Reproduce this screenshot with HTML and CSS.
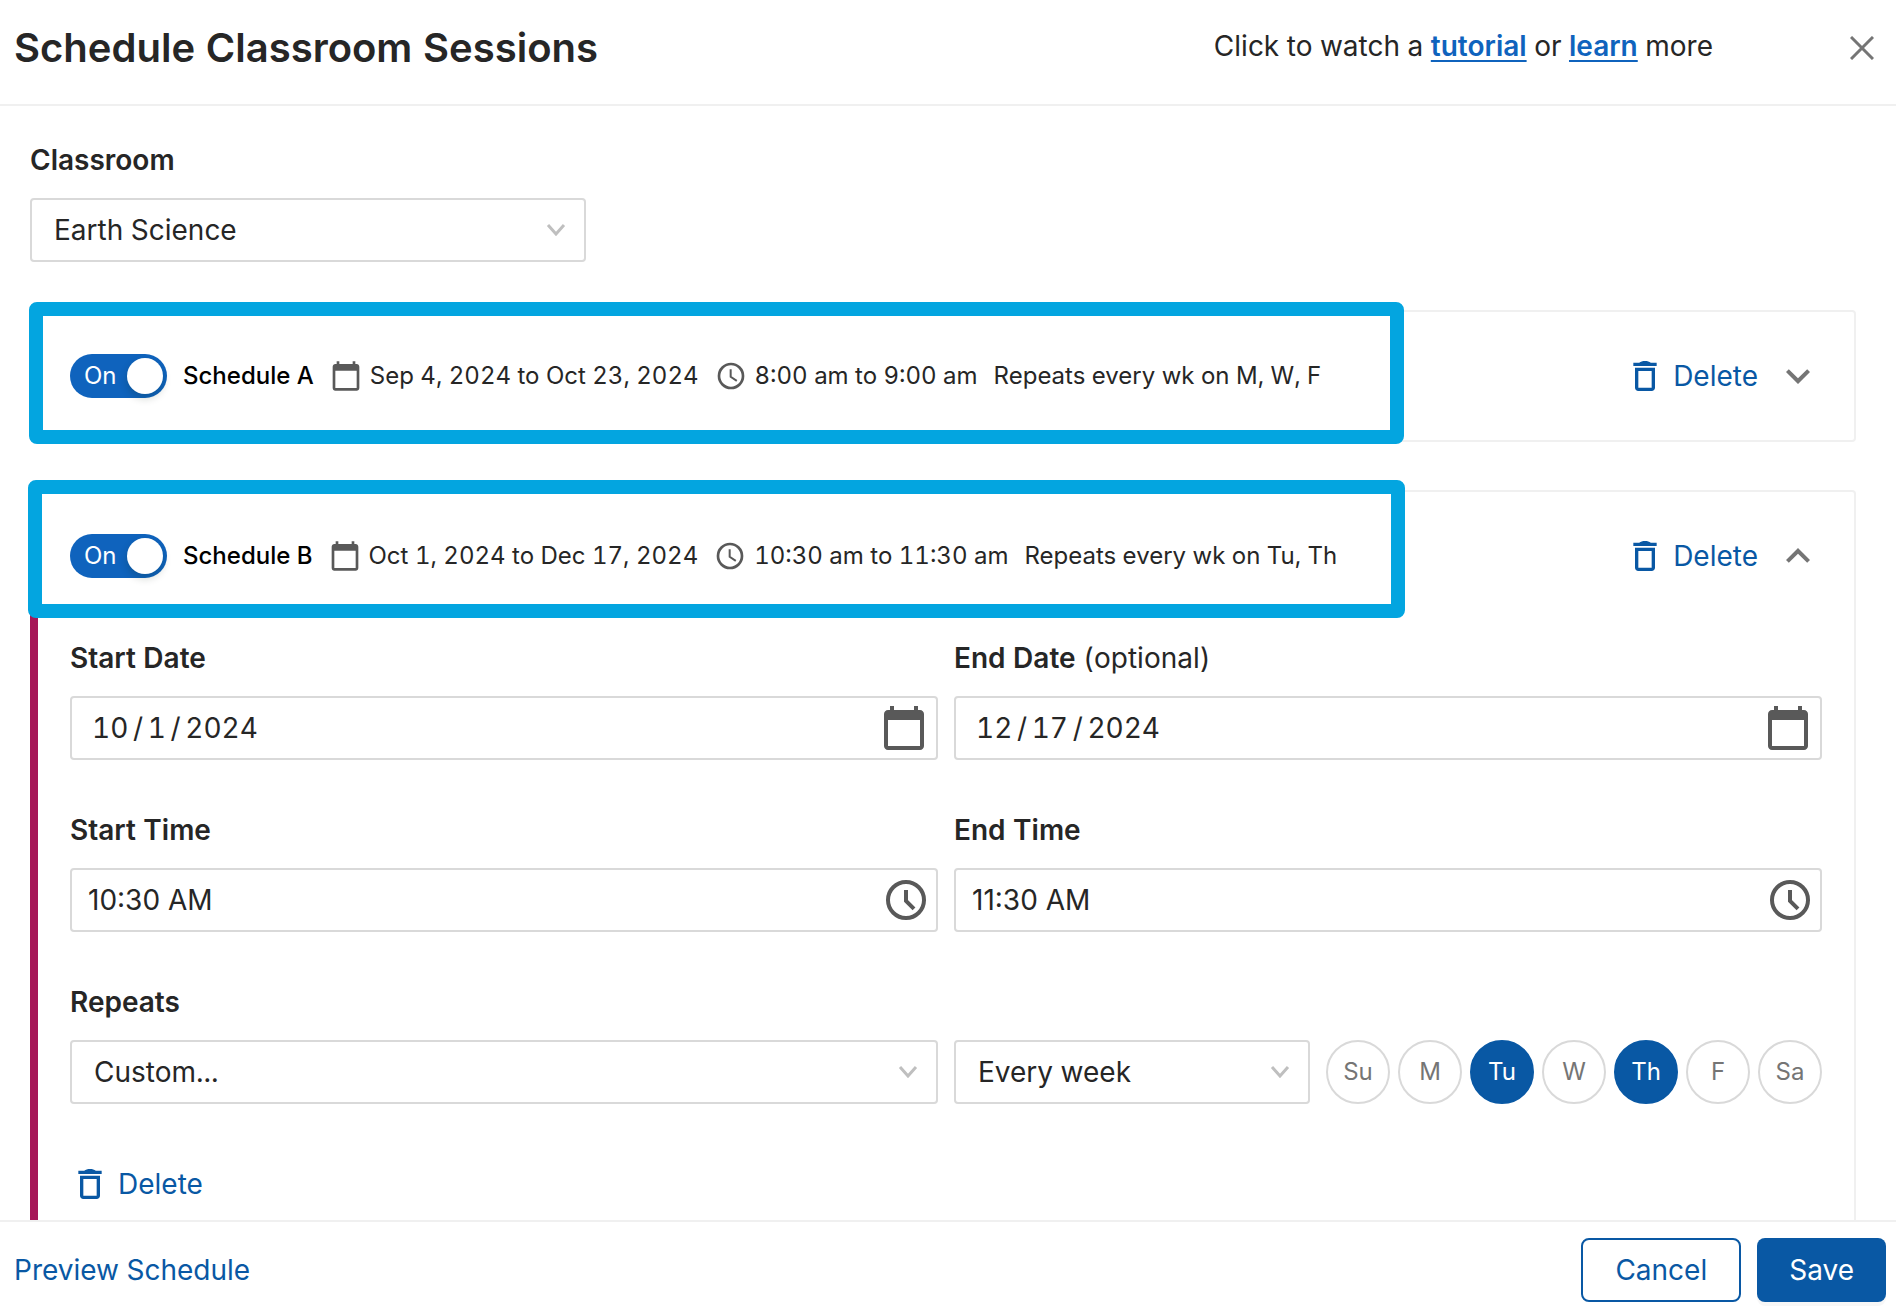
FILE: index.html
```html
<!DOCTYPE html>
<html lang="en">
<head>
<meta charset="utf-8">
<meta name="viewport" content="width=device-width, initial-scale=1">
<title>Schedule Classroom Sessions</title>
<link rel="stylesheet" href="styles.css">
</head>
<body>
<svg class="sprite" aria-hidden="true">
  <symbol id="i-calendar" viewBox="0 0 24 24"><path fill="currentColor" d="M20 3h-1V1h-2v2H7V1H5v2H4c-1.1 0-2 .9-2 2v16c0 1.1.9 2 2 2h16c1.1 0 2-.9 2-2V5c0-1.1-.9-2-2-2zm0 18H4V8h16v13z"/></symbol>
  <symbol id="i-clock" viewBox="0 0 24 24"><path fill="none" stroke="currentColor" stroke-width="2" d="M12 3a9 9 0 1 0 0 18a9 9 0 1 0 0-18z"/><path fill="none" stroke="currentColor" stroke-width="2" d="M12 7v5.4l4 4"/></symbol>
  <symbol id="i-clock-small" viewBox="0 0 24 24"><path fill="none" stroke="currentColor" stroke-width="2" d="M12 3a9 9 0 1 0 0 18a9 9 0 1 0 0-18z"/><path fill="none" stroke="currentColor" stroke-width="1.5" d="M11.75 7v5.6l4.6 3"/></symbol>
  <symbol id="i-trash" viewBox="0 0 24 24"><path fill="currentColor" d="M6 19c0 1.1.9 2 2 2h8c1.1 0 2-.9 2-2V7H6v12zM8 9h8v10H8V9zm7.5-5c-1-.7-2-1-3.500-1s-2.500.3-3.500 1H5v2h14V4z"/></symbol>
  <symbol id="i-expand" viewBox="0 0 24 24"><path fill="currentColor" d="M16.59 8.59L12 13.17 7.41 8.59 6 10l6 6 6-6z"/></symbol>
  <symbol id="i-collapse" viewBox="0 0 24 24"><path fill="currentColor" d="M12 8l-6 6 1.41 1.41L12 10.83l4.59 4.58L18 14z"/></symbol>
  <symbol id="i-caret" viewBox="0 0 20 12"><path fill="none" stroke="currentColor" stroke-width="3" d="M2 1l8 9l8-9"/></symbol>
  <symbol id="i-close" viewBox="0 0 24 24"><path fill="none" stroke="currentColor" stroke-width="3" d="M1 1l22 22M23 1L1 23"/></symbol>
</svg>

<div class="dialog" role="dialog" aria-labelledby="dialog-title">
  <header class="dialog-header">
    <h1 id="dialog-title">Schedule Classroom Sessions</h1>
    <p class="help">Click to watch a <a href="#tutorial">tutorial</a> or <a href="#learn">learn</a> more</p>
    <button class="close" type="button" aria-label="Close"><svg><use href="#i-close"/></svg></button>
  </header>

  <main class="dialog-body">
    <div class="field classroom">
      <label for="classroom">Classroom</label>
      <div class="select">
        <select id="classroom"><option>Earth Science</option></select>
        <svg><use href="#i-caret"/></svg>
      </div>
    </div>

    <section class="card">
      <div class="card-header">
        <label class="switch"><input type="checkbox" role="switch" checked>On</label>
        <h2>Schedule A</h2>
        <span class="fact"><svg><use href="#i-calendar"/></svg>Sep 4, 2024 to Oct 23, 2024</span>
        <span class="fact"><svg><use href="#i-clock-small"/></svg>8:00 am to 9:00 am</span>
        <span class="repeat">Repeats every wk on M, W, F</span>
        <button class="delete" type="button"><svg><use href="#i-trash"/></svg>Delete</button>
        <button class="toggle" type="button" aria-label="Expand Schedule A"><svg><use href="#i-expand"/></svg></button>
      </div>
      <div class="highlight highlight-a"></div>
    </section>

    <section class="card open">
      <div class="card-header">
        <label class="switch"><input type="checkbox" role="switch" checked>On</label>
        <h2>Schedule B</h2>
        <span class="fact"><svg><use href="#i-calendar"/></svg>Oct 1, 2024 to Dec 17, 2024</span>
        <span class="fact"><svg><use href="#i-clock-small"/></svg>10:30 am to 11:30 am</span>
        <span class="repeat">Repeats every wk on Tu, Th</span>
        <button class="delete" type="button"><svg><use href="#i-trash"/></svg>Delete</button>
        <button class="toggle" type="button" aria-label="Collapse Schedule B"><svg><use href="#i-collapse"/></svg></button>
      </div>
      <form class="card-form">
        <div class="field">
          <label for="start-date">Start Date</label>
          <div class="box date">
            <input id="start-date" type="text" value="10&#8198;/&#8198;1&#8198;/&#8198;2024">
            <button type="button" aria-label="Choose start date"><svg><use href="#i-calendar"/></svg></button>
          </div>
        </div>
        <div class="field">
          <label for="end-date">End Date <span class="optional">(optional)</span></label>
          <div class="box date">
            <input id="end-date" type="text" value="12&#8198;/&#8198;17&#8198;/&#8198;2024">
            <button type="button" aria-label="Choose end date"><svg><use href="#i-calendar"/></svg></button>
          </div>
        </div>
        <div class="field">
          <label for="start-time">Start Time</label>
          <div class="box time">
            <input id="start-time" type="text" value="10:30 AM">
            <button type="button" aria-label="Choose start time"><svg><use href="#i-clock"/></svg></button>
          </div>
        </div>
        <div class="field">
          <label for="end-time">End Time</label>
          <div class="box time">
            <input id="end-time" type="text" value="11:30 AM">
            <button type="button" aria-label="Choose end time"><svg><use href="#i-clock"/></svg></button>
          </div>
        </div>
        <div class="field">
          <label for="repeats">Repeats</label>
          <div class="select">
            <select id="repeats"><option>Custom...</option></select>
            <svg><use href="#i-caret"/></svg>
          </div>
        </div>
        <div class="frequency">
          <div class="select">
            <select aria-label="Frequency"><option>Every week</option></select>
            <svg><use href="#i-caret"/></svg>
          </div>
          <div class="days" role="group" aria-label="Days of the week">
            <label class="day"><input type="checkbox">Su</label>
            <label class="day"><input type="checkbox">M</label>
            <label class="day"><input type="checkbox" checked>Tu</label>
            <label class="day"><input type="checkbox">W</label>
            <label class="day"><input type="checkbox" checked>Th</label>
            <label class="day"><input type="checkbox">F</label>
            <label class="day"><input type="checkbox">Sa</label>
          </div>
        </div>
        <button class="delete" type="button"><svg><use href="#i-trash"/></svg>Delete</button>
      </form>
      <div class="highlight highlight-b"></div>
    </section>
  </main>

  <footer class="dialog-footer">
    <a class="preview" href="#preview">Preview Schedule</a>
    <button class="btn" type="button">Cancel</button>
    <button class="btn primary" type="button">Save</button>
  </footer>
</div>
</body>
</html>
```
FILE: styles.css
```css
:root {
  --text: #262626;
  --blue: #0958a4;
  --link: #0f63bd;
  --grey: #757575;
  --icon: #595959;
  --border: #d9d9d9;
  --rule: #f0f0f0;
}

* { box-sizing: border-box; }

body {
  margin: 0;
  color: var(--text);
  background: #fff;
  font: 28px/44px Inter, "Liberation Sans", sans-serif;
  font-variant-numeric: tabular-nums;
}

button, input, select {
  margin: 0;
  padding: 0;
  border: 0;
  background: none;
  color: inherit;
  font: inherit;
}

button { cursor: pointer; }
svg { display: block; flex: none; }
.sprite { display: none; }
h1, h2, p { margin: 0; }

.dialog {
  display: flex;
  flex-direction: column;
  height: 100vh;
}

/* Header */
.dialog-header {
  display: flex;
  align-items: center;
  height: 106px;
  padding: 0 22px 8px 14px;
  border-bottom: 2px solid var(--rule);
}

.dialog-header h1 {
  flex: 1;
  font-size: 40px;
  font-weight: 600;
}

.help { padding-bottom: 4px; }

.help a {
  color: var(--link);
  font-weight: 600;
  text-decoration-thickness: 2px;
  text-underline-offset: 4px;
}

.close { margin-left: 137px; color: var(--grey); }
.close svg { width: 24px; height: 24px; }

/* Scrolling content */
.dialog-body {
  flex: 1;
  min-height: 0;
  padding: 32px 40px 32px 30px;
  overflow-y: auto;
  scrollbar-width: none;
}

.field {
  display: flex;
  flex-direction: column;
  gap: 16px;
}

.field label { font-weight: 600; }
.field .optional { font-weight: 400; }

.classroom { max-width: 556px; }

.select, .box {
  height: 64px;
  border: 2px solid var(--border);
  border-radius: 4px;
}

.select {
  display: grid;
  align-items: center;
}

.select select {
  grid-area: 1 / 1;
  width: 100%;
  height: 60px;
  padding: 0 56px 0 22px;
  appearance: none;
}

.select svg {
  grid-area: 1 / 1;
  justify-self: end;
  width: 20px;
  height: 12px;
  margin-right: 18px;
  color: #bfbfbf;
  pointer-events: none;
}

.box {
  display: flex;
  align-items: center;
}

.box input {
  flex: 1;
  min-width: 0;
  height: 60px;
}

.box button svg { width: 48px; height: 48px; color: var(--icon); }
.date { padding: 0 8px 0 20px; }
.time { padding: 0 6px 0 16px; }
.time input { font-variant-numeric: normal; }

/* Schedule cards */
.card {
  position: relative;
  margin-top: 48px;
  border: 2px solid var(--rule);
  border-radius: 4px;
}

.card-header {
  display: flex;
  align-items: center;
  height: 128px;
  padding: 0 32px 0 38px;
  font-size: 24px;
  white-space: nowrap;
}

.open { border-left: 8px solid #a61758; }
.open .card-header { padding-left: 32px; }

.switch {
  display: flex;
  align-items: center;
  width: 97px;
  height: 44px;
  padding: 0 4px 0 14px;
  border-radius: 22px;
  background: var(--link);
  color: #fff;
  cursor: pointer;
}

.switch input {
  order: 1;
  width: 36px;
  height: 36px;
  margin-left: auto;
  border-radius: 50%;
  background: #fff;
  box-shadow: 0 4px 8px rgba(0, 35, 11, .2);
  appearance: none;
}

.card-header h2 {
  margin-left: 16px;
  color: #000;
  font-size: 24px;
  font-weight: 500;
}

.fact {
  display: flex;
  align-items: center;
  gap: 8px;
  margin-left: 16px;
}

.fact svg { width: 32px; height: 32px; color: var(--icon); }
.repeat { margin-left: 16px; }

.delete {
  display: flex;
  align-items: center;
  gap: 8px;
  height: 64px;
  color: var(--blue);
  font-size: 28px;
}

.delete svg { width: 40px; height: 40px; }
.card-header .delete { margin-left: auto; }

.toggle {
  margin-left: 16px;
  color: var(--grey);
}

.toggle svg { width: 48px; height: 48px; }

.highlight {
  position: absolute;
  border: 14px solid #03a5e0;
  border-radius: 8px;
  pointer-events: none;
}

.highlight-a { inset: -10px 450px -4px -3px; }
.highlight-b { top: -12px; right: 449px; left: -10px; height: 138px; }

.card-form {
  display: grid;
  grid-template-columns: 1fr 1fr;
  gap: 48px 16px;
  padding: 16px 32px 32px;
}

.frequency {
  display: flex;
  align-items: flex-end;
  gap: 16px;
}

.frequency .select { flex: 1; }

.days { display: flex; gap: 8px; }

.day {
  display: grid;
  place-items: center;
  width: 64px;
  height: 64px;
  border: 2px solid var(--border);
  border-radius: 50%;
  color: var(--grey);
  font-size: 24px;
  cursor: pointer;
}

.day input { display: none; }

.day:has(:checked) {
  border-color: var(--blue);
  background: var(--blue);
  color: #fff;
}

/* Footer */
.dialog-footer {
  display: flex;
  align-items: center;
  gap: 16px;
  padding: 16px 10px 12px 14px;
  border-top: 2px solid var(--rule);
}

.preview {
  margin-right: auto;
  color: var(--blue);
  text-decoration: none;
}

.btn {
  height: 64px;
  padding: 0 32px;
  border: 2px solid var(--blue);
  border-radius: 8px;
  color: var(--blue);
}

.primary {
  border: 0;
  background: var(--blue);
  box-shadow: 0 4px 0 rgba(0, 0, 0, .03);
  color: #fff;
}
```
